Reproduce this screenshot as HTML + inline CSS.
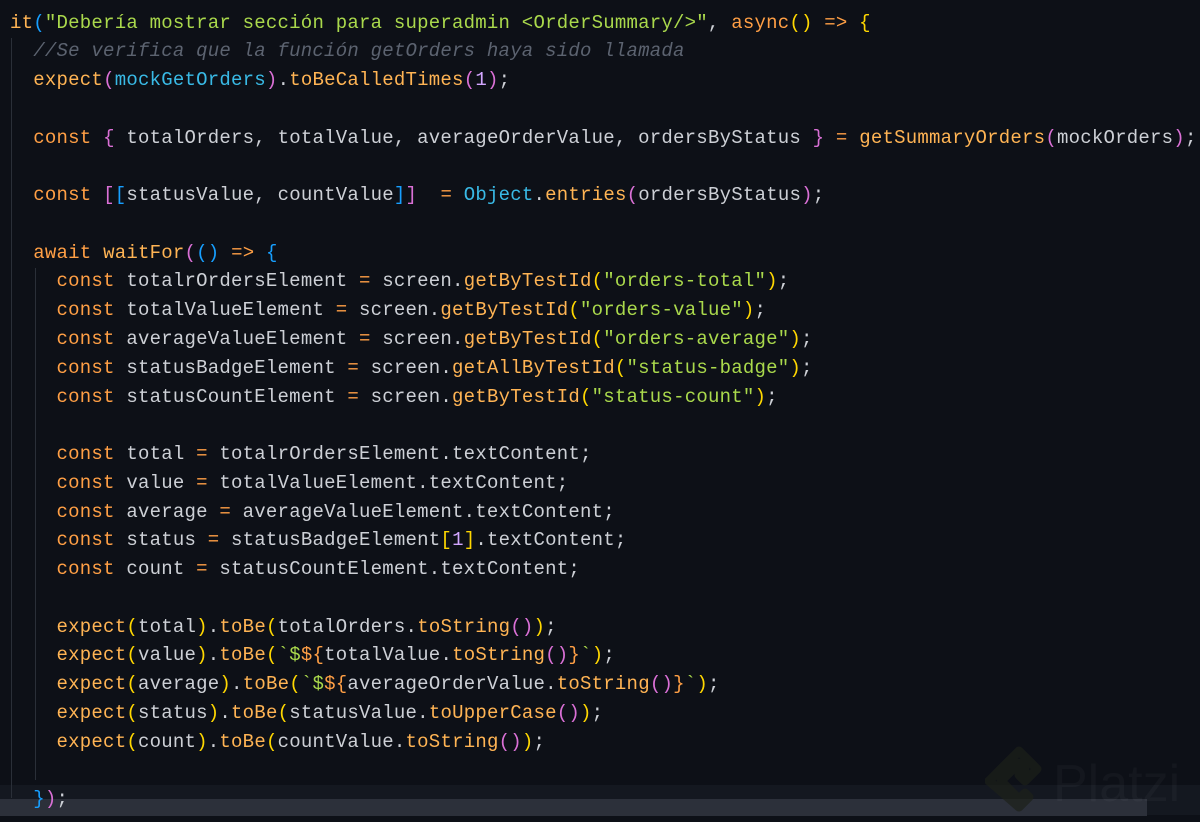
<!DOCTYPE html>
<html><head><meta charset="utf-8"><style>
html,body{margin:0;padding:0;width:1200px;height:822px;overflow:hidden;background:#0d1017;}
.cur{position:absolute;left:0;top:785px;width:1200px;height:30px;background:#141820;}
.sb{position:absolute;left:0;top:799px;width:1147px;height:17px;background:#2c303a;}
.g{position:absolute;width:1px;background:#2a2f38;}
pre{position:absolute;left:10px;top:8.6px;margin:0;font-family:"Liberation Mono",monospace;font-size:19px;line-height:28.77px;color:#cdd0d6;letter-spacing:0.23px;z-index:2;}
.k{color:#ff9f45}.f{color:#ffb454}.s{color:#aad94c}.c{color:#5c6370;font-style:italic}.o{color:#39bae6}
.y{color:#ffd700}.p{color:#da70d6}.b{color:#179fff}.n{color:#d2a6ff}
.wm{position:absolute;left:985px;top:745px;z-index:3}
</style></head><body>
<div class="cur"></div>
<div class="g" style="left:11px;top:38px;height:760px"></div>
<div class="g" style="left:35px;top:268px;height:512px"></div>
<div class="sb"></div>
<svg class="wm" width="210" height="70" viewBox="0 0 210 70">
<path d="M34 6 L52 24 L40 36 L34 30 L40 24 L34 18 L16 36 L34 54 L40 48 L44 52 L34 62 L4 36 Z" fill="none" stroke="#1c2119" stroke-opacity="0.7" stroke-width="9" stroke-linejoin="round"/>
<text x="68" y="56" font-family="Liberation Sans,sans-serif" font-size="52" fill="#ffffff" fill-opacity="0.03">Platzi</text>
</svg>
<pre><span class="f">it</span><span class="b">(</span><span class="s">"Debería mostrar sección para superadmin &lt;OrderSummary/&gt;"</span>, <span class="k">async</span><span class="y">()</span> <span class="k">=&gt;</span> <span class="y">{</span>
  <span class="c">//Se verifica que la función getOrders haya sido llamada</span>
  <span class="f">expect</span><span class="p">(</span><span class="o">mockGetOrders</span><span class="p">)</span>.<span class="f">toBeCalledTimes</span><span class="p">(</span><span class="n">1</span><span class="p">)</span>;

  <span class="k">const</span> <span class="p">{</span> totalOrders, totalValue, averageOrderValue, ordersByStatus <span class="p">}</span> <span class="k">=</span> <span class="f">getSummaryOrders</span><span class="p">(</span>mockOrders<span class="p">)</span>;

  <span class="k">const</span> <span class="p">[</span><span class="b">[</span>statusValue, countValue<span class="b">]</span><span class="p">]</span>  <span class="k">=</span> <span class="o">Object</span>.<span class="f">entries</span><span class="p">(</span>ordersByStatus<span class="p">)</span>;

  <span class="k">await</span> <span class="f">waitFor</span><span class="p">(</span><span class="b">()</span> <span class="k">=&gt;</span> <span class="b">{</span>
    <span class="k">const</span> totalrOrdersElement <span class="k">=</span> screen.<span class="f">getByTestId</span><span class="y">(</span><span class="s">"orders-total"</span><span class="y">)</span>;
    <span class="k">const</span> totalValueElement <span class="k">=</span> screen.<span class="f">getByTestId</span><span class="y">(</span><span class="s">"orders-value"</span><span class="y">)</span>;
    <span class="k">const</span> averageValueElement <span class="k">=</span> screen.<span class="f">getByTestId</span><span class="y">(</span><span class="s">"orders-average"</span><span class="y">)</span>;
    <span class="k">const</span> statusBadgeElement <span class="k">=</span> screen.<span class="f">getAllByTestId</span><span class="y">(</span><span class="s">"status-badge"</span><span class="y">)</span>;
    <span class="k">const</span> statusCountElement <span class="k">=</span> screen.<span class="f">getByTestId</span><span class="y">(</span><span class="s">"status-count"</span><span class="y">)</span>;

    <span class="k">const</span> total <span class="k">=</span> totalrOrdersElement.textContent;
    <span class="k">const</span> value <span class="k">=</span> totalValueElement.textContent;
    <span class="k">const</span> average <span class="k">=</span> averageValueElement.textContent;
    <span class="k">const</span> status <span class="k">=</span> statusBadgeElement<span class="y">[</span><span class="n">1</span><span class="y">]</span>.textContent;
    <span class="k">const</span> count <span class="k">=</span> statusCountElement.textContent;

    <span class="f">expect</span><span class="y">(</span>total<span class="y">)</span>.<span class="f">toBe</span><span class="y">(</span>totalOrders.<span class="f">toString</span><span class="p">()</span><span class="y">)</span>;
    <span class="f">expect</span><span class="y">(</span>value<span class="y">)</span>.<span class="f">toBe</span><span class="y">(</span><span class="s">`$</span><span class="k">${</span>totalValue.<span class="f">toString</span><span class="p">()</span><span class="k">}</span><span class="s">`</span><span class="y">)</span>;
    <span class="f">expect</span><span class="y">(</span>average<span class="y">)</span>.<span class="f">toBe</span><span class="y">(</span><span class="s">`$</span><span class="k">${</span>averageOrderValue.<span class="f">toString</span><span class="p">()</span><span class="k">}</span><span class="s">`</span><span class="y">)</span>;
    <span class="f">expect</span><span class="y">(</span>status<span class="y">)</span>.<span class="f">toBe</span><span class="y">(</span>statusValue.<span class="f">toUpperCase</span><span class="p">()</span><span class="y">)</span>;
    <span class="f">expect</span><span class="y">(</span>count<span class="y">)</span>.<span class="f">toBe</span><span class="y">(</span>countValue.<span class="f">toString</span><span class="p">()</span><span class="y">)</span>;

  <span class="b">}</span><span class="p">)</span>;</pre>
</body></html>
